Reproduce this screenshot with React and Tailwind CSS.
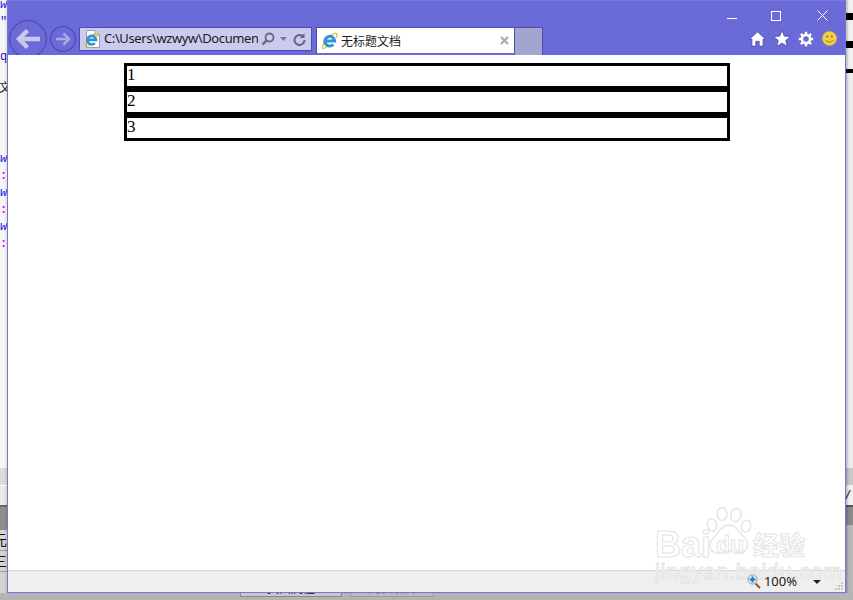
const IeLogo = ({ size = 16 }) => (
    <svg width={size} height={size} viewBox="0 0 16 16" fill="none">
        <path d="M1 14.8C2.6 9 7.6 3 13 1.2C15.4.6 15.4 3 14.2 5.4" stroke="#f0bd2a" strokeWidth="1.2" />
        <path d="M1 14.8C1.4 15.8 3.6 15.4 5.4 14.2" stroke="#f0bd2a" strokeWidth="1.2" />
        <path d="M3.8 8.4H12.8A4.6 4.6 0 1 0 11.6 11.8" stroke="#2f93d6" strokeWidth="2.8" />
    </svg>
);

const PageIcon = () => (
    <div className="relative w-[16px] h-[18px]">
        <svg width="16" height="18" viewBox="0 0 16 18" className="absolute left-0 top-0">
            <path d="M2.5.5H11L15.5 5V17.5H2.5Z" fill="#fff" stroke="#9a9ab0" />
            <path d="M11 .5V5H15.5" fill="#e4e4f0" stroke="#9a9ab0" />
        </svg>
        <div className="absolute left-0 top-[2px]">
            <IeLogo size={15} />
        </div>
    </div>
);

const BackButton = () => (
    <svg width="38" height="38" viewBox="0 0 38 38" fill="none" className="shrink-0">
        <circle cx="19" cy="19" r="18.4" stroke="#4e4eac" strokeWidth="1.2" fill="#6a6ad8" />
        <path d="M31 19H10M18.5 10.5L10 19L18.5 27.5" stroke="#c8c8ee" strokeWidth="4.4" />
    </svg>
);

const ForwardButton = () => (
    <svg width="26" height="26" viewBox="0 0 26 26" fill="none" className="shrink-0">
        <circle cx="13" cy="13" r="12.4" stroke="#4e4eac" strokeWidth="1.2" fill="#6a6ad8" />
        <path d="M6 13H19M13.5 7.5L19 13L13.5 18.5" stroke="#a8a8e4" strokeWidth="2.6" />
    </svg>
);

const HomeIcon = () => (
    <svg width="17" height="16" viewBox="0 0 16 15">
        <path d="M8 .8L15.4 7.6H13.2V14.2H9.6V9.6H6.4V14.2H2.8V7.6H.6Z" fill="#fff" stroke="#3d3d8c" strokeWidth=".6" />
    </svg>
);

const StarIcon = () => (
    <svg width="18" height="17" viewBox="0 0 17 16" className="-mx-[1px]">
        <path d="M8.5.6L10.7 5.8L16.3 6.2L12 9.8L13.4 15.3L8.5 12.3L3.6 15.3L5 9.8L.7 6.2L6.3 5.8Z" fill="#fff" stroke="#3d3d8c" strokeWidth=".6" />
    </svg>
);

const GearIcon = () => (
    <svg width="16" height="16" viewBox="0 0 16 16" fill="none">
        <circle cx="8" cy="8" r="4.4" stroke="#3d3d8c" strokeWidth="3.4" />
        <path d="M8 .8V15.2M.8 8H15.2M2.9 2.9L13.1 13.1M13.1 2.9L2.9 13.1" stroke="#fff" strokeWidth="2.4" />
        <circle cx="8" cy="8" r="4.4" stroke="#fff" strokeWidth="2.2" />
        <circle cx="8" cy="8" r="2.8" fill="#6a6ad8" />
    </svg>
);

const SmileIcon = () => (
    <svg width="15" height="15" viewBox="0 0 15 15" fill="none">
        <circle cx="7.5" cy="7.5" r="7.2" fill="#f4cf45" stroke="#c9a93f" strokeWidth=".5" />
        <circle cx="5.2" cy="5.6" r="1" fill="#8a6d14" />
        <circle cx="9.8" cy="5.6" r="1" fill="#8a6d14" />
        <path d="M3.8 9C5 11.6 10 11.6 11.2 9" stroke="#8a6d14" strokeWidth=".9" />
    </svg>
);

const ZoomIcon = () => (
    <svg width="14" height="15" viewBox="0 0 14 15" fill="none">
        <path d="M8.5 9.5L13 14" stroke="#8a6238" strokeWidth="2.2" />
        <circle cx="5.5" cy="5.5" r="4.6" fill="#e4eefa" stroke="#8c9aac" />
        <path d="M5.5 2.6V8.4M2.6 5.5H8.4" stroke="#1d72c4" strokeWidth="2" />
    </svg>
);

const Grip = () => (
    <svg width="8" height="8" viewBox="0 0 8 8" fill="#c4c4c4">
        <rect x="6" y="0" width="2" height="2" />
        <rect x="3" y="3" width="2" height="2" />
        <rect x="6" y="3" width="2" height="2" />
        <rect x="0" y="6" width="2" height="2" />
        <rect x="3" y="6" width="2" height="2" />
        <rect x="6" y="6" width="2" height="2" />
    </svg>
);

const Paw = () => (
    <svg width="46" height="48" viewBox="0 0 46 48" fill="#fff" stroke="#e4e4e4" strokeWidth="1.4">
        <ellipse cx="6" cy="18" rx="4.6" ry="6.4" transform="rotate(-14 6 18)" />
        <ellipse cx="16" cy="7" rx="5" ry="6.4" />
        <ellipse cx="30" cy="8" rx="5" ry="6.8" transform="rotate(12 30 8)" />
        <ellipse cx="40" cy="19" rx="4.6" ry="6" transform="rotate(16 40 19)" />
        <path d="M23 18C31 18 33 26 38 30C44 36 42 46 33 46C29 46 26 44 23 44C19 44 16 47 11 46C3 45 2 36 8 30C13 26 15 18 23 18Z" />
    </svg>
);

const rows = ['1', '2', '3'];

const leftBits = [
    { text: 'w', top: 'top-[-3px]', cls: 'text-[#1c1ce6] italic' },
    { text: '"', top: 'top-[14px]', cls: 'text-[#1c1ce6]' },
    { text: 'q', top: 'top-[49px]', cls: 'text-[#2020b0]' },
    { text: '文', top: 'top-[81px]', cls: 'text-[#222] -ml-px' },
    { text: 'w', top: 'top-[151px]', cls: 'text-[#1c1ce6] italic' },
    { text: ':', top: 'top-[168px]', cls: 'text-[#ff00ff] font-bold' },
    { text: 'w', top: 'top-[185px]', cls: 'text-[#1c1ce6] italic' },
    { text: ':', top: 'top-[202px]', cls: 'text-[#ff00ff] font-bold' },
    { text: 'w', top: 'top-[219px]', cls: 'text-[#1c1ce6] italic' },
    { text: ':', top: 'top-[236px]', cls: 'text-[#ff00ff] font-bold' },
];

const LeftStrip = () => (
    <div className="relative w-[7px] h-full overflow-hidden bg-[#f6f6f6] font-['Liberation_Mono','Noto_Sans_CJK_SC',monospace] text-[12px] leading-[16px]">
        {leftBits.map((bit, i) => (
            <span key={i} className={`absolute left-0 ${bit.top} ${bit.cls}`}>{bit.text}</span>
        ))}
        <div className="absolute left-0 right-0 top-[468px] h-[17px] bg-[#dcdcdc]" />
        <div className="absolute left-0 right-0 top-[485px] h-[20px] bg-[#eaeaea] border-t border-white" />
        <div className="absolute left-0 right-0 top-[505px] h-[25px] bg-[#8e8e8e] border-t-2 border-[#666]" />
        <div className="absolute left-0 right-0 top-[530px] h-[63px] bg-[#d4d4d4]">
            <div className="h-[21px] border-b border-[#9a9a9a] overflow-hidden text-[14px] text-[#111] font-['Noto_Sans_CJK_SC',sans-serif] pt-[1px] -ml-[7px]">元</div>
            <div className="h-[21px] border-b border-[#9a9a9a] overflow-hidden text-[14px] text-[#111] font-['Noto_Sans_CJK_SC',sans-serif] pt-[1px] -ml-[7px]">三</div>
        </div>
        <div className="absolute left-[4px] right-0 top-0 bottom-0 bg-gradient-to-r from-black/0 to-black/10" />
    </div>
);

const RightStrip = () => (
    <div className="relative flex-1 h-full overflow-hidden bg-[#f0f0f0]">
        <div className="absolute right-0 left-0 top-[13px] h-[7px] bg-black" />
        <div className="absolute right-0 left-0 top-[41px] h-[7px] bg-black" />
        <div className="absolute right-0 left-0 top-[69px] h-[4px] bg-black" />
        <div className="absolute right-0 left-0 top-[73px] h-[395px] bg-[#ececec]" />
        <div className="absolute right-0 left-0 top-[468px] h-[17px] bg-[#c8c8c8]" />
        <div className="absolute right-0 left-0 top-[485px] h-[20px] bg-[#f0f0f0] text-[13px] leading-[20px] text-black italic font-['Liberation_Sans',sans-serif]">/</div>
        <div className="absolute right-0 left-0 top-[505px] h-[20px] bg-[#8a8a8a] border-t-2 border-[#555]" />
        <div className="absolute right-0 left-0 top-[525px] h-[68px] bg-[#b8b8b8]" />
        <div className="absolute left-0 w-[3px] top-0 bottom-0 bg-gradient-to-r from-black/25 to-black/0" />
    </div>
);

const App = () => {
    return (
        <div className="w-[853px] h-[600px] overflow-hidden flex flex-col bg-[#b4b4b4]">
            <div className="flex h-[593px] shrink-0">
                <LeftStrip />
                <div className="relative w-[839px] h-full flex flex-col border-x border-b border-[#7474e0] bg-white">
                    <div className="h-[55px] shrink-0 bg-[#6a6ad8] overflow-hidden border-t border-[#7878dc]">
                        <div className="h-[26px] flex items-start">
                            <div className="ml-auto flex items-center text-white">
                                <div className="w-[10px] h-px bg-white mt-[14px] mr-[34px]" />
                                <div className="w-[10px] h-[10px] border border-white mt-[9px] mr-[36px]" />
                                <svg width="11" height="11" viewBox="0 0 11 11" className="mt-[9px] mr-[17px]" stroke="#fff" fill="none">
                                    <path d="M.5 .5L10.5 10.5M10.5 .5L.5 10.5" />
                                </svg>
                            </div>
                        </div>
                        <div className="h-[28px] flex items-start">
                            <div className="ml-[1px] -mt-[7px]">
                                <BackButton />
                            </div>
                            <div className="ml-[3px] -mt-[1px]">
                                <ForwardButton />
                            </div>
                            <div className="ml-[3px] w-[233px] h-[24px] flex items-center bg-[#cbcbf0] border border-[#4d4db0] font-['Noto_Sans',sans-serif] text-[13px] text-[#1a1a1a]">
                                <div className="ml-[4px] w-[20px] shrink-0">
                                    <PageIcon />
                                </div>
                                <span className="w-[154px] shrink-0 overflow-hidden whitespace-nowrap tracking-[-0.4px]">C:\Users\wzwyw\Documen</span>
                                <svg width="14" height="14" viewBox="0 0 14 14" fill="none" stroke="#66667a" strokeWidth="1.8" className="ml-[3px] shrink-0">
                                    <circle cx="8.5" cy="5.5" r="4" />
                                    <path d="M5.5 8.5L1.5 12.5" strokeWidth="2.4" />
                                </svg>
                                <svg width="7" height="4" viewBox="0 0 7 4" fill="#77778c" className="ml-[5px] shrink-0">
                                    <path d="M0 0H7L3.5 4Z" />
                                </svg>
                                <svg width="13" height="13" viewBox="0 0 13 13" fill="none" stroke="#66667a" strokeWidth="2" className="ml-[6px] shrink-0">
                                    <path d="M10.5 4A5 5 0 1 0 11.5 7" />
                                    <path d="M11.5 0V5H7" fill="#66667a" stroke="none" />
                                </svg>
                            </div>
                            <div className="ml-[4px] w-[199px] h-[28px] flex items-center bg-white border-x border-t border-[#4d4db0] border-b-2 border-b-[#6a6ad8] font-['Noto_Sans_CJK_SC',sans-serif] text-[12px] text-[#1a1a1a]">
                                <div className="ml-[4px] mr-[3px]">
                                    <IeLogo size={17} />
                                </div>
                                <span>无标题文档</span>
                                <svg width="9" height="9" viewBox="0 0 9 9" stroke="#a8a8a8" strokeWidth="2" className="ml-auto mr-[5px]">
                                    <path d="M1 1L8 8M8 1L1 8" />
                                </svg>
                            </div>
                            <div className="w-[28px] h-[28px] bg-[#a4a4d0] border-r border-t border-[#4d4db0]" />
                            <div className="ml-auto flex items-center gap-[8px] mr-[8px] mt-[3px]">
                                <HomeIcon />
                                <StarIcon />
                                <GearIcon />
                                <SmileIcon />
                            </div>
                        </div>
                    </div>

                    <div className="flex-1 pt-[8px] pl-[116px] font-['Liberation_Serif',serif] text-[17px] leading-[18px] text-black">
                        <div className="w-[606px]">
                            {rows.map((row) => (
                                <div key={row} className="h-[26px] border-[3px] border-black">{row}</div>
                            ))}
                        </div>
                    </div>

                    <div className="h-[22px] shrink-0 flex items-center bg-[#efefef] border-t border-[#d4d4d4] font-['Noto_Sans',sans-serif] text-[13px] text-[#1a1a1a]">
                        <div className="relative z-10 ml-auto flex items-center">
                            <ZoomIcon />
                            <span className="ml-[3px]">100%</span>
                            <svg width="8" height="4" viewBox="0 0 8 4" fill="#222" className="ml-[16px]">
                                <path d="M0 0H8L4 4Z" />
                            </svg>
                            <div className="ml-[14px] mr-[2px] mt-[9px]">
                                <Grip />
                            </div>
                        </div>
                    </div>

                    <div className="absolute left-[647px] top-[507px] w-[160px] h-[78px] pointer-events-none font-['Liberation_Sans',sans-serif] text-white/60 [-webkit-text-stroke:1px_#e4e4e4]">
                        <span className="absolute left-0 top-[18px] text-[36px] leading-[40px] font-bold">Bai</span>
                        <div className="absolute left-[51px] top-0">
                            <Paw />
                        </div>
                        <span className="absolute left-[61px] top-[26px] text-[23px] leading-[24px] font-bold">du</span>
                        <span className="absolute left-[98px] top-[22px] text-[26px] leading-[30px] font-['Noto_Sans_CJK_SC',sans-serif] font-bold">经验</span>
                        <span className="absolute left-0 top-[52px] text-[22px] leading-[26px] whitespace-nowrap tracking-[0.6px]">jingyan.baidu.com</span>
                    </div>
                </div>
                <RightStrip />
            </div>

            <div className="flex-1 flex overflow-hidden font-['Noto_Sans_CJK_SC',sans-serif] text-[12px] leading-[20px] text-black">
                <div className="ml-[240px] w-[102px] h-[20px] -mt-[16px] shrink-0 overflow-hidden text-center border border-[#8a8a8a] bg-[#c8c8c8]">页面属性</div>
                <div className="ml-[8px] w-[84px] h-[20px] -mt-[16px] shrink-0 overflow-hidden text-center border border-[#9a9a9a] bg-[#bcbcbc] text-[#777]">列表项目</div>
            </div>
        </div>
    );
};

export default App;
